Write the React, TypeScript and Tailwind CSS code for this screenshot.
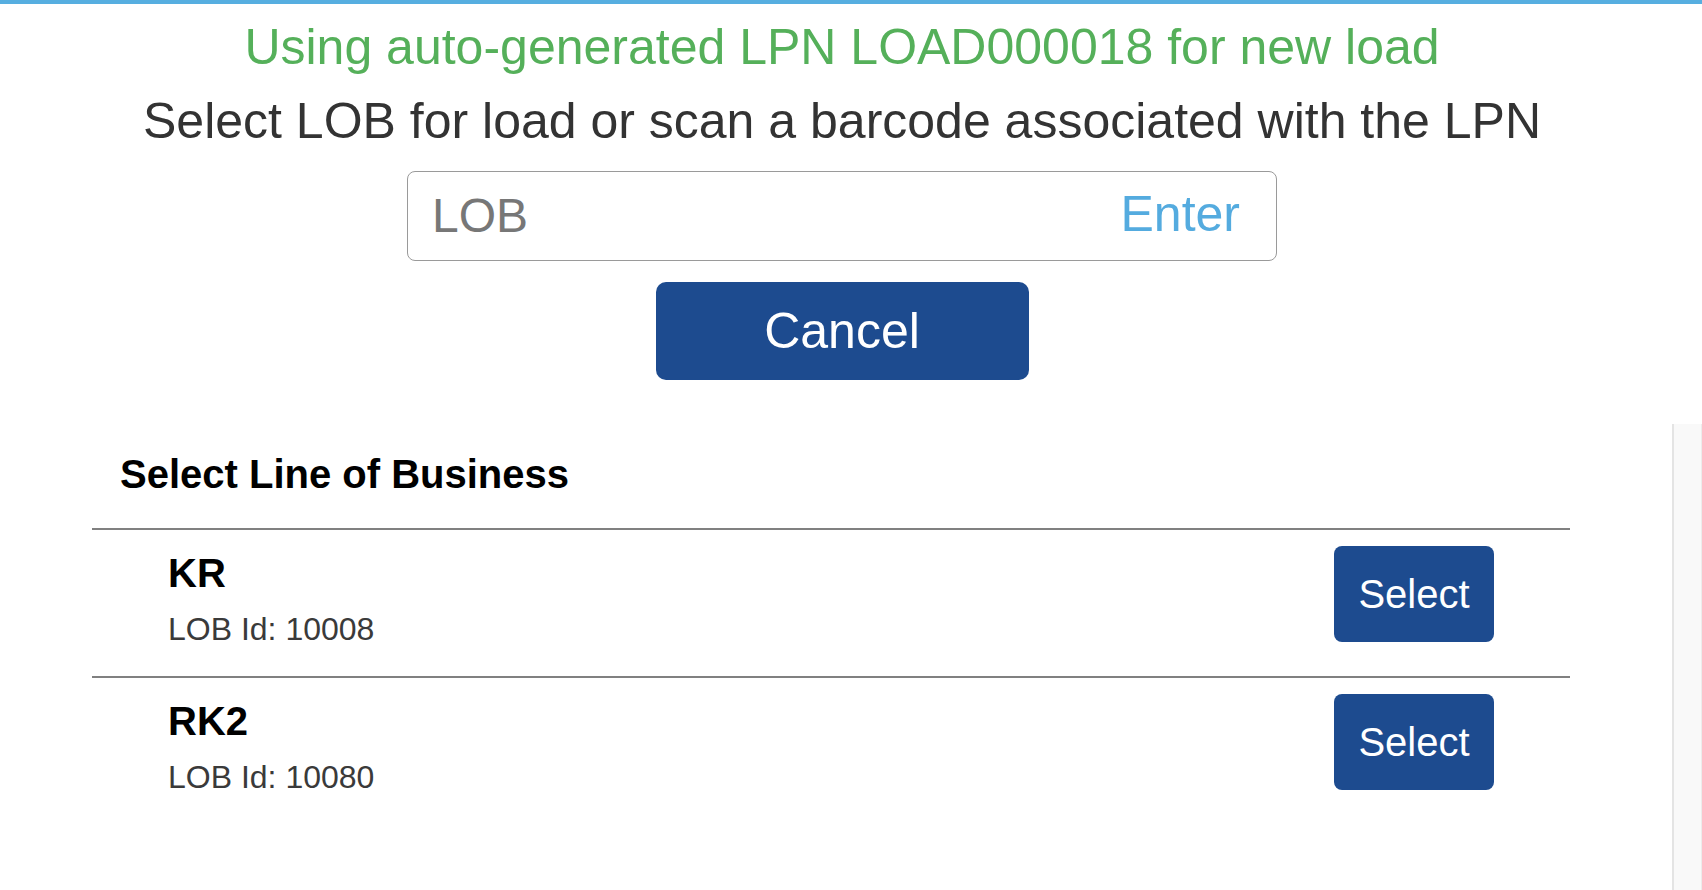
import React from "react";

type Lob = { code: string; id: number };

const lobs: Lob[] = [
  { code: "KR", id: 10008 },
  { code: "RK2", id: 10080 },
];

export default function App() {
  return (
    <div
      className="w-[1702px] h-[890px] bg-white overflow-hidden flex flex-col"
      style={{ fontFamily: "'Liberation Sans', Arial, Helvetica, sans-serif" }}
    >
      {/* ── Top accent bar ─────────────────────────── */}
      <div className="h-[4px] bg-[#56aee0] shrink-0" />

      {/* ── Load header ────────────────────────────── */}
      <div className="w-[1684px] flex flex-col items-center shrink-0">
        <p className="mt-[15px] text-[50px] leading-[56px] text-[#55b05a] whitespace-nowrap">
          Using auto-generated LPN LOAD000018 for new load
        </p>
        <p className="mt-[18px] text-[50px] leading-[56px] text-[#333333] whitespace-nowrap">
          Select LOB for load or scan a barcode associated with the LPN
        </p>

        <div className="mt-[22px] w-[870px] h-[90px] border border-[#9a9a9a] rounded-[8px] flex items-center pl-[24px] pr-[36px]">
          <input
            placeholder="LOB"
            className="flex-1 min-w-0 text-[48px] leading-[56px] text-[#333] placeholder:text-[#777777] outline-none bg-transparent"
          />
          <button className="text-[50px] leading-[56px] text-[#54abdf] -mt-[4px]">Enter</button>
        </div>

        <button className="mt-[21px] w-[373px] h-[98px] rounded-[10px] bg-[#1d4b8f] text-white text-[50px] leading-[56px]">
          Cancel
        </button>
      </div>

      {/* ── LOB list ───────────────────────────────── */}
      <div className="mt-[44px] flex flex-1 min-h-0">
        <div className="flex-1">
          <h2 className="mt-[27px] pl-[120px] text-[40px] leading-[46px] font-bold text-black">
            Select Line of Business
          </h2>

          <div className="mt-[31px] ml-[92px] w-[1478px]">
            {lobs.map((l) => (
              <div key={l.code} className="border-t-2 border-[#808080]">
                <div className="flex justify-between items-start px-[76px]">
                  <div className="pt-[20px] pb-[29px]">
                    <div className="text-[40px] leading-[46px] font-bold text-black">{l.code}</div>
                    <div className="mt-[15px] text-[32px] leading-[36px] text-[#3a3a3a]">
                      LOB Id: {l.id}
                    </div>
                  </div>
                  <button className="mt-[16px] w-[160px] h-[96px] rounded-[8px] bg-[#1d4b8f] text-white text-[40px] leading-[46px]">
                    Select
                  </button>
                </div>
              </div>
            ))}
          </div>
        </div>

        {/* scrollbar track */}
        <div className="w-[30px] bg-[#f9f9f9] border-l-2 border-[#e4e4e4] border-r border-r-[#ececec]" />
      </div>
    </div>
  );
}
